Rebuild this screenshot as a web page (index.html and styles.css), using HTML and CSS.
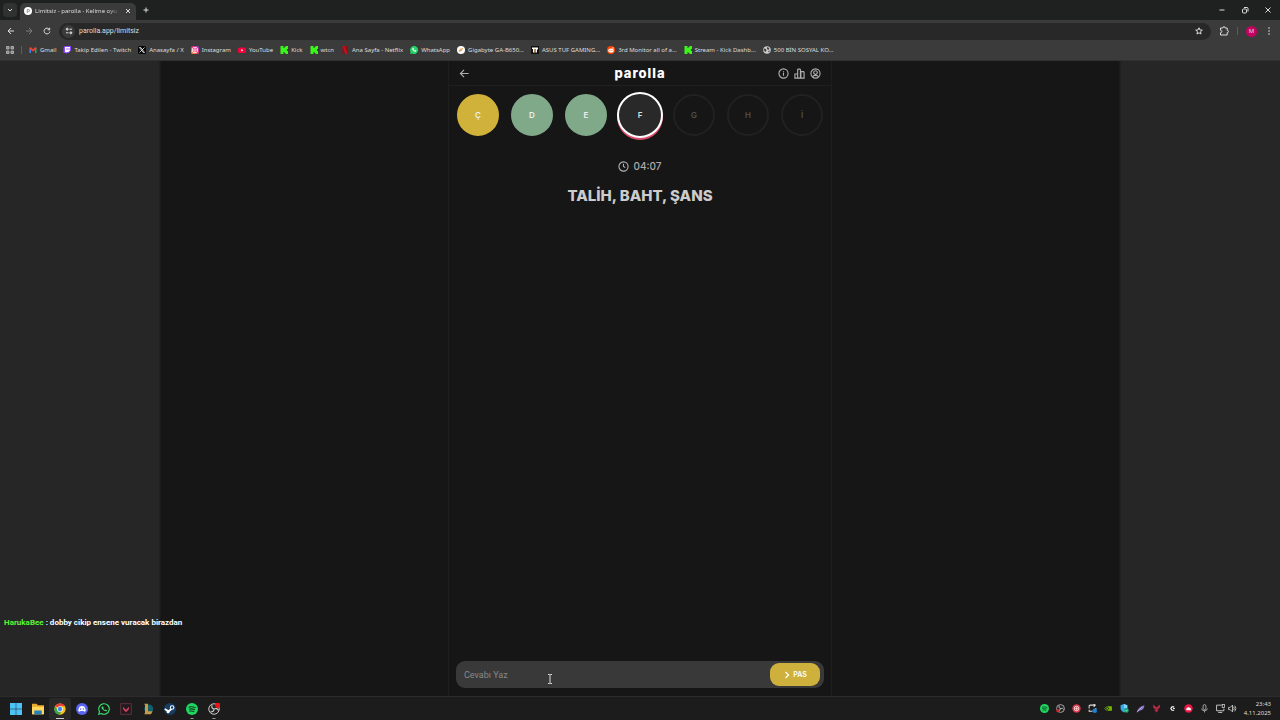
FILE: index.html
```html
<!DOCTYPE html>
<html lang="tr">
<head>
    <meta charset="utf-8">
    <meta name="viewport" content="width=device-width, initial-scale=1">
    <title>Limitsiz - parolla - Kelime oyunu</title>
    <link rel="stylesheet" href="styles.css">
</head>
<body>

<header class="browser">
    <div class="tabbar">
        <button class="tab-search" aria-label="Sekme ara"><svg class="tiny" viewBox="0 0 8 8"><path class="line" d="M2 3l2 2 2-2"/></svg></button>
        <div class="tab">
            <svg class="fav" viewBox="0 0 16 16"><circle cx="8" cy="8" r="8" fill="#fff"/><path d="M6.500 12V5h2.500a2 2 0 0 1 0 4.300H7" fill="none" stroke="#777" stroke-width="1.500"/></svg>
            <span class="tab-title">Limitsiz - parolla - Kelime oyu</span>
            <button class="icon-button" aria-label="Sekmeyi kapat"><svg class="tiny" viewBox="0 0 8 8"><path class="line" d="M2 2l4 4M6 2L2 6"/></svg></button>
        </div>
        <button class="icon-button new-tab" aria-label="Yeni sekme"><svg class="tiny" viewBox="0 0 8 8"><path class="line" d="M4 1.500v5M1.500 4h5"/></svg></button>
        <div class="window-buttons">
            <button class="icon-button" aria-label="Küçült"><svg class="tiny" viewBox="0 0 8 8"><path class="line" d="M1.500 4h5"/></svg></button>
            <button class="icon-button" aria-label="Geri yükle"><svg class="tiny" viewBox="0 0 8 8"><rect class="line" x="1.500" y="3" width="4" height="4" rx="1"/><path class="line" d="M3 1.500h3q1 0 1 1v3"/></svg></button>
            <button class="icon-button" aria-label="Kapat"><svg class="tiny" viewBox="0 0 8 8"><path class="line" d="M1.500 1.500l5 5M6.500 1.500l-5 5"/></svg></button>
        </div>
    </div>

    <div class="toolbar">
        <div class="history">
            <button class="icon-button" aria-label="Geri"><svg class="tiny" viewBox="0 0 8 8"><path class="line" d="M7 4H1M4 1L1 4l3 3"/></svg></button>
            <button class="icon-button dim" aria-label="İleri"><svg class="tiny" viewBox="0 0 8 8"><path class="line" d="M1 4h6M4 1l3 3-3 3"/></svg></button>
            <button class="icon-button" aria-label="Yenile"><svg class="tiny" viewBox="0 0 8 8"><path class="line" d="M6.500 2.500A2.900 2.900 0 1 0 6.900 4.500M6.700 .8v2H4.600"/></svg></button>
        </div>
        <div class="address">
            <span class="site-info"><svg class="tiny" viewBox="0 0 8 8"><path class="line" d="M1 2.200h2M5 5.800h2M4.500 2.200H7M1 5.800h2.500"/><circle cx="2.200" cy="2.200" r="1" class="line"/><circle cx="5.800" cy="5.800" r="1" class="line"/></svg></span>
            <input type="text" class="url" aria-label="Adres" value="parolla.app/limitsiz">
            <button class="icon-button" aria-label="Yer işareti ekle"><svg class="tiny" viewBox="0 0 16 16"><path class="line thick" d="M8 1.500l1.900 4.400 4.700.4-3.600 3.100 1.100 4.600L8 11.600 3.900 14 5 9.400 1.400 6.300l4.700-.4z"/></svg></button>
        </div>
        <button class="icon-button" aria-label="Uzantılar"><svg class="ext" viewBox="0 0 10 10"><path class="line" d="M1.500 2h2.300q0-1.300 1.200-1.300T6.200 2h2v2.300q1.200 0 1.200 1.200T8.200 6.700V9H1.500V6.700q1.300 0 1.300-1.200T1.500 4.300z"/></svg></button>
        <span class="divider"></span>
        <button class="avatar" aria-label="Profil">M</button>
        <button class="icon-button" aria-label="Menü"><svg class="tiny" viewBox="0 0 8 8"><g fill="#ddd"><circle cx="4" cy="1" r=".8"/><circle cx="4" cy="4" r=".8"/><circle cx="4" cy="7" r=".8"/></g></svg></button>
    </div>

    <nav class="bookmarks">
        <svg class="fav" viewBox="0 0 8 8"><path fill="#888" stroke="#aaa" d="M.5.500h2.500V3H.5zM5 .5h2.500V3H5zM.5 5H3v2.500H.5zM5 5h2.500v2.500H5z"/></svg>
        <span class="divider"></span>
        <a href="#"><svg class="fav" viewBox="0 0 16 16"><path d="M1 4v10h3V7z" fill="#4285f4"/><path d="M15 4v10h-3V7z" fill="#34a853"/><path d="M1 3l3-.5 4 4 4-4 3 .5v3l-7 5-7-5z" fill="#ea4335"/></svg><span>Gmail</span></a>
        <a href="#"><svg class="fav" viewBox="0 0 16 16"><path d="M3 0h13v9l-5 5H8l-2 2v-2H1V4z" fill="#9146ff"/><path d="M4 2h10v7l-3 3H8l-2 1v-1H4z" fill="#fff"/><path d="M8 4v4M12 4v4" stroke="#9146ff" stroke-width="1.500"/></svg><span>Takip Edilen - Twitch</span></a>
        <a href="#"><svg class="fav" viewBox="0 0 16 16"><rect width="16" height="16" rx="3" fill="#050505"/><path d="M3 3l7.500 10H13L5.500 3zM13 3L3 13" fill="none" stroke="#fff" stroke-width="1.500"/></svg><span>Anasayfa / X</span></a>
        <a href="#"><svg class="fav" viewBox="0 0 16 16"><defs><linearGradient id="insta" x1="0" y1="1" x2="1" y2="0"><stop offset="0" stop-color="#ffb13b"/><stop offset=".5" stop-color="#f4306d"/><stop offset="1" stop-color="#9b35d8"/></linearGradient></defs><rect width="16" height="16" rx="4" fill="url(#insta)"/><rect x="3" y="3" width="10" height="10" rx="3" fill="none" stroke="#fff" stroke-width="1.500"/><circle cx="8" cy="8" r="2.500" fill="none" stroke="#fff" stroke-width="1.500"/></svg><span>Instagram</span></a>
        <a href="#"><svg class="fav" viewBox="0 0 16 16"><rect y="3" width="16" height="11" rx="3" fill="#f0033c"/><path d="M6.500 6v5l4-2.500z" fill="#fff"/></svg><span>YouTube</span></a>
        <a href="#"><svg class="fav" viewBox="0 0 16 16"><path id="kick" d="M1 0h6v4h2V2h2V0h5v6h-2v4h2v6h-5v-2H9v-2H7v4H1z" fill="#3cf51a"/></svg><span>Kick</span></a>
        <a href="#"><svg class="fav" viewBox="0 0 16 16"><use href="#kick"/></svg><span>wtcn</span></a>
        <a href="#"><svg class="fav" viewBox="0 0 16 16"><path d="M3 0h4v16H3zM9 0h4v16H9z" fill="#9c0a14"/><path d="M3 0h4l6 16H9z" fill="#c9101b"/></svg><span>Ana Sayfa - Netflix</span></a>
        <a href="#"><svg class="fav" viewBox="0 0 16 16"><path d="M0 16l1.200-4A8 8 0 1 1 4 14.900z" fill="#25d366"/><path d="M5.500 4.500q-2 2 1 4.500t5 2l.5-1.500-2-1-1 1-2-2 .7-1-1-2z" fill="#fff" stroke="#fff"/></svg><span>WhatsApp</span></a>
        <a href="#"><svg class="fav" viewBox="0 0 16 16"><circle cx="8" cy="8" r="8" fill="#fff"/><path d="M4 10q0-4 7-5-1 6-6 5zM5 11l4-4" fill="none" stroke="#e0862c" stroke-width="1.500"/></svg><span>Gigabyte GA-B650...</span></a>
        <a href="#"><svg class="fav" viewBox="0 0 16 16"><rect width="16" height="16" fill="#111"/><path d="M2 3h12v4h-2v6H9V6H7v7H4V6H2z" fill="#fff"/><path d="M7 6h2v7H7z" fill="#e78c29"/></svg><span>ASUS TUF GAMING...</span></a>
        <a href="#"><svg class="fav" viewBox="0 0 16 16"><circle cx="8" cy="8" r="8" fill="#ff4500"/><ellipse cx="8" cy="9" rx="5.500" ry="4" fill="#fff"/><circle cx="12" cy="4" r="1.300" fill="#fff"/><circle cx="6" cy="8.500" r="1.100" fill="#ff4500"/><circle cx="10" cy="8.500" r="1.100" fill="#ff4500"/></svg><span>3rd Monitor all of a...</span></a>
        <a href="#"><svg class="fav" viewBox="0 0 16 16"><use href="#kick"/></svg><span>Stream - Kick Dashb...</span></a>
        <a href="#"><svg class="fav" viewBox="0 0 16 16"><circle cx="8" cy="8" r="7.500" fill="#ccc"/><path d="M2 5l4 1 1 3-2 3-3-3zM8 2l5 2-2 4-3-2zM10 10l4-1-2 4z" fill="#444"/></svg><span>500 BİN SOSYAL KO...</span></a>
    </nav>
</header>

<main class="page">
    <section class="game">
        <div class="game-header">
            <a href="#" aria-label="Geri"><svg class="head-icon" viewBox="0 0 12 12"><path d="M10.500 6h-9M5.500 2L1.500 6l4 4"/></svg></a>
            <h1 class="logo">parolla</h1>
            <div class="header-icons">
                <button class="icon-button" aria-label="Bilgi"><svg class="head-icon" viewBox="0 0 12 12"><circle cx="6" cy="6" r="5"/><path d="M5.500 5.500H6v3M6 3.200v.8"/></svg></button>
                <button class="icon-button" aria-label="İstatistik"><svg class="head-icon" viewBox="0 0 12 12"><path d="M1 11V6.500h3V11zM4 11V2q0-.8.800-.8h1.400q.8 0 .8.800v9zM7.500 11V4H10q1 0 1 1v6z"/></svg></button>
                <button class="icon-button" aria-label="Hesap"><svg class="head-icon" viewBox="0 0 12 12"><circle cx="6" cy="6" r="5"/><circle cx="6" cy="5" r="2"/><path d="M2.800 9.600Q3.500 8 6 8t3.200 1.600"/></svg></button>
            </div>
        </div>

        <ol class="letters">
            <li class="letter passed">Ç</li>
            <li class="letter correct">D</li>
            <li class="letter correct">E</li>
            <li class="letter active">F</li>
            <li class="letter">G</li>
            <li class="letter">H</li>
            <li class="letter">İ</li>
        </ol>

        <div class="timer">
            <svg class="head-icon" viewBox="0 0 12 12"><circle cx="6" cy="6" r="5"/><path d="M6 3v3l2 1.200"/></svg>
            <span>04:07</span>
        </div>
        <h2 class="question">TALİH, BAHT, ŞANS</h2>

        <form class="answer">
            <input type="text" aria-label="Cevabı Yaz" placeholder="Cevabı Yaz">
            <button type="button"><svg class="tiny" viewBox="0 0 8 8"><path d="M2.500 1l3 3-3 3" fill="none" stroke="#fff" stroke-width="1.200"/></svg>PAS</button>
        </form>
    </section>

    <p class="chat"><span class="chat-name">HarukaBee</span> : dobby cikip ensene vuracak birazdan</p>
    <svg class="cursor" viewBox="0 0 6 10"><path d="M1 .5h1.500L3 1l.5-.5H5M3 1v8M1 9.500h1.500L3 9l.5.500H5" fill="none" stroke="#ddd"/></svg>
</main>

<footer class="taskbar">
    <div class="apps">
        <button aria-label="Başlat"><svg viewBox="0 0 16 16"><path d="M0 0h7.700v7.700H0zM8.300 0H16v7.700H8.300zM0 8.300h7.700V16H0zM8.300 8.300H16V16H8.300z" fill="#4cc2f5"/></svg></button>
        <button aria-label="Dosya Gezgini"><svg viewBox="0 0 16 16"><path d="M0 1h6l2 2h8v12H0z" fill="#e9a92c"/><path d="M0 5h16v10H0z" fill="#ffd65c"/><path d="M3 10h10v5H3z" fill="#2780bd"/></svg></button>
        <button class="open current" aria-label="Chrome"><svg viewBox="0 0 16 16"><circle cx="8" cy="8" r="7.500" fill="#fbc116"/><path d="M8 8L1.500 4.200A7.500 7.500 0 0 1 14.500 4.200H8z" fill="#ea4335"/><path d="M1.500 4.200A7.500 7.500 0 0 0 7 15.500L10.500 10 5 10z" fill="#34a853"/><circle cx="8" cy="8" r="3.800" fill="#fff"/><circle cx="8" cy="8" r="2.900" fill="#4285f4"/></svg></button>
        <button aria-label="Discord"><svg viewBox="0 0 16 16"><circle cx="8" cy="8" r="8" fill="#5865f2"/><path d="M5 4.500q3-1 6 0 2 3 2 6l-2 1-1-1q-2 .5-4 0l-1 1-2-1q0-3 2-6z" fill="#fff"/><circle cx="6.200" cy="8" r="1" fill="#5865f2"/><circle cx="9.800" cy="8" r="1" fill="#5865f2"/></svg></button>
        <button aria-label="WhatsApp"><svg viewBox="0 0 16 16"><path d="M1 15l1-3.500A7 7 0 1 1 4.500 14z" fill="none" stroke="#3be06f" stroke-width="1.500"/><path d="M5.500 4.500q-2 2 1 4.500t5 2l.5-1.500-2-1-1 1-2-2 .7-1-1-2z" fill="#3be06f"/></svg></button>
        <button aria-label="Valorant"><svg viewBox="0 0 16 16"><rect x="1" y="1" width="14" height="14" fill="#211b20" stroke="#7a3344"/><path d="M4 5l4 4 4-4v3l-3 3.500H7L4 8z" fill="#d23e58"/></svg></button>
        <button aria-label="League of Legends"><svg viewBox="0 0 16 16"><circle cx="9" cy="8" r="6" fill="#12606b"/><path d="M3 1h5v10h6l-2 4H3l1-2V3z" fill="#c49a4c"/></svg></button>
        <button aria-label="Steam"><svg viewBox="0 0 16 16"><circle cx="8" cy="8" r="8" fill="#173c63"/><path d="M1 8l5 3 4-3" fill="none" stroke="#fff" stroke-width="2.500"/><circle cx="10.800" cy="6" r="2.400" fill="#173c63" stroke="#fff" stroke-width="1.400"/><circle cx="5.500" cy="11.500" r="2" fill="#fff"/></svg></button>
        <button class="open" aria-label="Spotify"><svg viewBox="0 0 16 16"><circle id="spot" cx="8" cy="8" r="8" fill="#1ed760"/><path id="waves" d="M3.500 5.500q5-1.500 9.500 1M4 8.300q4-1.200 8 .7M4.500 11q3.500-1 6.500.6" fill="none" stroke="#173b22" stroke-width="1.400"/></svg></button>
        <button class="open" aria-label="OBS"><svg viewBox="0 0 16 16"><g id="obs"><circle cx="8" cy="8" r="7" fill="#222" stroke="#ccc" stroke-width="1.300"/><path d="M8 8q-4-1-2.500-5M8 8q4-2 6 2M8 8q0 4-5 4" fill="none" stroke="#ccc" stroke-width="1.500"/></g><circle cx="13" cy="3" r="3.500" fill="#e11"/></svg></button>
    </div>

    <div class="tray">
        <svg viewBox="0 0 16 16"><use href="#spot"/><use href="#waves"/></svg>
        <svg viewBox="0 0 16 16"><use href="#obs"/><circle cx="3" cy="12" r="2.500" fill="#d22"/></svg>
        <svg viewBox="0 0 16 16"><circle cx="8" cy="8" r="7.500" fill="#db3748"/><circle cx="8" cy="8" r="4" fill="none" stroke="#fff" stroke-width="1.400"/><path d="M5 8h6M8 5v6" stroke="#fff"/></svg>
        <svg viewBox="0 0 16 16"><path d="M2 8V4q0-2 2-2h8M10 0l3 2-3 3M14 7v2M2 10v3h6" fill="none" stroke="#ddd" stroke-width="1.800"/><circle cx="12" cy="12" r="4" fill="#1686d9"/></svg>
        <svg viewBox="0 0 16 16"><path d="M7 4h7v8H7z" fill="#76b900"/><path d="M1 8q5-6 9 0-4 6-9 0z" fill="#202020" stroke="#76b900" stroke-width="1.300"/><circle cx="6" cy="8" r="1.500" fill="#76b900"/></svg>
        <svg viewBox="0 0 16 16"><path d="M1 2l6-2 6 2v5q0 5-6 8-6-3-6-8z" fill="#35a9e8"/><path d="M7 0l6 2v5H7z" fill="#7bd2f6"/><circle cx="11.500" cy="11.500" r="4" fill="#18a666"/><path d="M9.500 11.500l1.500 1.500 2.500-3" stroke="#fff" fill="none"/></svg>
        <svg viewBox="0 0 16 16"><path d="M1 15Q4 4 15 2q-1 9-9 10l-4 3z" fill="#8e78c7"/><path d="M2 14L11 5" stroke="#d4c9ee"/></svg>
        <svg viewBox="0 0 16 16"><path d="M2 1l6 5 6-5v5l-6 5-6-5zM4 10l4 5 4-5" fill="#c02745"/></svg>
        <svg viewBox="0 0 16 16"><path d="M11 5H7L5 8l2 3h4M9 8h3" fill="none" stroke="#fff" stroke-width="2"/></svg>
        <svg viewBox="0 0 16 16"><circle cx="8" cy="8" r="7.500" fill="#ee1744"/><path d="M4 10q-.500-3 2.500-4 4-1 6 3v2H5z" fill="#fff"/></svg>
        <svg viewBox="0 0 16 16"><rect x="5.500" y="1" width="5" height="9" rx="2.500" fill="none" stroke="#ccc" stroke-width="1.300"/><path d="M3 8q0 4 5 4t5-4M8 12v3" fill="none" stroke="#ccc" stroke-width="1.300"/></svg>
        <div class="network">
            <svg viewBox="0 0 16 16"><path d="M10 2H1v10h13V8M4 15h7" fill="none" stroke="#ddd" stroke-width="1.500"/><rect x="11" y="1" width="4" height="5" fill="none" stroke="#ddd" stroke-width="1.300"/></svg>
            <svg viewBox="0 0 16 16"><path d="M1 6h3l4-4v12l-4-4H1zM10 5q2 3 0 6M12 3q4 5 0 10" fill="none" stroke="#ddd" stroke-width="1.400"/></svg>
        </div>
    </div>
    <div class="clock"><span>23:43</span><span>4.11.2025</span></div>
</footer>

</body>
</html>
```
FILE: styles.css
```css
* {
    box-sizing: border-box;
}

body {
    margin: 0;
    min-height: 100vh;
    display: flex;
    flex-direction: column;
    background: #161616;
    color: #ddd;
    font-family: "Noto Sans", sans-serif;
    font-size: 6px;
}

button {
    border: 0;
    padding: 0;
    background: none;
    color: inherit;
    font-family: inherit;
    cursor: pointer;
}

a {
    color: inherit;
    text-decoration: none;
}

svg {
    display: block;
    flex-shrink: 0;
}

.icon-button {
    display: flex;
}

.tiny,
.fav {
    width: 8px;
    height: 8px;
}

.line {
    fill: none;
    stroke: #ddd;
    stroke-width: 1;
}

.thick {
    stroke-width: 2;
}

.dim {
    opacity: 0.4;
}

.divider {
    width: 1px;
    height: 8px;
    background: #5c5c5c;
}

/* browser window */
.browser {
    background: #3b3b3b;
    border-bottom: 1px solid #303030;
}

.tabbar {
    height: 20px;
    display: flex;
    align-items: center;
    padding: 0 8px 0 3px;
    background: #1f2120;
}

.tab-search {
    width: 14px;
    height: 14px;
    display: flex;
    align-items: center;
    justify-content: center;
    background: #303231;
    border-radius: 4px;
}

.tab {
    width: 116px;
    height: 17px;
    margin: 3px 0 0 3px;
    padding: 0 4px 2px;
    display: flex;
    align-items: center;
    gap: 3px;
    background: #3b3b3b;
    border-radius: 5px 5px 0 0;
}

.tab-title {
    flex: 1;
    white-space: nowrap;
    mask-image: linear-gradient(to right, #000 85%, transparent);
}

.new-tab {
    margin-left: 6px;
}

.window-buttons {
    margin-left: auto;
    display: flex;
    gap: 15px;
}

.toolbar {
    height: 22px;
    display: flex;
    align-items: center;
    gap: 8px;
    padding: 0 7px;
}

.history {
    display: flex;
    gap: 10px;
}

.address {
    flex: 1;
    height: 17px;
    padding: 0 8px 0 3px;
    display: flex;
    align-items: center;
    gap: 4px;
    background: #282828;
    border-radius: 9px;
}

.site-info {
    width: 13px;
    height: 13px;
    display: flex;
    align-items: center;
    justify-content: center;
    background: #3b3b3b;
    border-radius: 50%;
}

.url {
    flex: 1;
    border: 0;
    padding: 0;
    outline: 0;
    background: none;
    color: #ddd;
    font-family: Roboto, sans-serif;
    font-size: 7px;
}

.ext {
    width: 10px;
    height: 10px;
}

.avatar {
    width: 11px;
    height: 11px;
    background: #c2045f;
    border-radius: 50%;
    font-size: 6px;
}

.bookmarks {
    height: 18px;
    display: flex;
    align-items: center;
    gap: 7px;
    padding: 0 6px 2px;
    white-space: nowrap;
}

.bookmarks a {
    display: flex;
    align-items: center;
    gap: 3px;
}

/* page */
.page {
    position: relative;
    flex: 1;
    display: flex;
    justify-content: center;
    background: linear-gradient(to right, #262626 12.4%, #161616 12.6%, #161616 87.4%, #262626 87.6%);
}

.game {
    width: 100%;
    max-width: 384px;
    display: flex;
    flex-direction: column;
    border: 1px solid #1e1e1e;
    border-width: 0 1px;
    font-family: Inter, sans-serif;
}

.game-header {
    height: 25px;
    display: grid;
    grid-template-columns: 1fr auto 1fr;
    align-items: center;
    padding: 0 10px;
    border-bottom: 1px solid #202020;
}

.head-icon {
    width: 11px;
    height: 11px;
    fill: none;
    stroke: #b0b0b0;
    stroke-width: 1.2;
}

.logo {
    margin: 0;
    color: #fff;
    font-size: 13px;
    font-weight: 800;
    letter-spacing: 1px;
}

.header-icons {
    display: flex;
    justify-content: flex-end;
    gap: 5px;
}

.letters {
    height: 58px;
    margin: 0;
    padding: 0;
    display: flex;
    justify-content: center;
    align-items: center;
    gap: 12px;
    list-style: none;
}

.letter {
    width: 42px;
    height: 42px;
    display: flex;
    align-items: center;
    justify-content: center;
    border: 2px solid #212121;
    border-radius: 50%;
    color: #505050;
    font-size: 8px;
    font-weight: 600;
}

.passed {
    background: #d0b23b;
    border-color: #d0b23b;
    color: #eee;
}

.correct {
    background: #80a989;
    border-color: #80a989;
    color: #eee;
}

.active {
    width: 46px;
    height: 46px;
    margin: 0 -2px;
    background: #292929;
    border-color: #fff;
    box-shadow: 0 2px 0 #d8506d;
    color: #ddd;
}

.timer {
    margin-top: 14px;
    display: flex;
    justify-content: center;
    align-items: center;
    gap: 4px;
    color: #aaa;
    font-size: 10px;
    font-weight: 500;
    line-height: 16px;
}

.question {
    margin: 11px 0 0;
    color: #ccc;
    font-size: 15px;
    font-weight: 800;
    line-height: 22px;
    text-align: center;
}

.answer {
    margin: auto 7px 8px;
    height: 27px;
    padding: 2px 4px 2px 8px;
    display: flex;
    background: #393939;
    border-radius: 9px;
}

.answer input {
    flex: 1;
    min-width: 0;
    border: 0;
    padding: 0;
    outline: 0;
    background: none;
    color: #ddd;
    font-family: Roboto, sans-serif;
    font-size: 9px;
}

.answer input::placeholder {
    color: #888;
}

.answer button {
    width: 50px;
    display: flex;
    align-items: center;
    justify-content: center;
    gap: 2px;
    background: #ceb13c;
    border-radius: 9px;
    color: #fff;
    font-size: 7px;
    font-weight: 600;
}

/* stream overlay */
.chat {
    position: absolute;
    left: 4px;
    bottom: 67px;
    margin: 0;
    color: #fff;
    font-family: Roboto, sans-serif;
    font-size: 8px;
    font-weight: 700;
    line-height: 12px;
}

.chat-name {
    color: #5bf536;
}

.cursor {
    position: absolute;
    left: 547px;
    bottom: 12px;
    width: 6px;
    height: 10px;
}

/* taskbar */
.taskbar {
    height: 24px;
    display: flex;
    align-items: center;
    padding: 0 9px 0 5px;
    background: #1c1c1c;
    border-top: 1px solid #2c2c2c;
}

.apps {
    display: flex;
}

.apps button {
    position: relative;
    width: 22px;
    height: 22px;
    display: flex;
    align-items: center;
    justify-content: center;
    border-radius: 3px;
}

.apps svg {
    width: 12px;
    height: 12px;
}

.apps .current {
    background: #292929;
}

.open::after {
    content: "";
    position: absolute;
    left: 50%;
    bottom: 1px;
    width: 3px;
    height: 1px;
    background: #999;
    transform: translateX(-50%);
}

.current::after {
    width: 8px;
    background: #ccc;
}

.tray {
    margin-left: auto;
    display: flex;
    align-items: center;
    gap: 7px;
}

.tray svg {
    width: 9px;
    height: 9px;
}

.network {
    display: flex;
    gap: 3px;
}

.clock {
    width: 34px;
    display: flex;
    flex-direction: column;
    text-align: right;
    line-height: 9px;
}
```
